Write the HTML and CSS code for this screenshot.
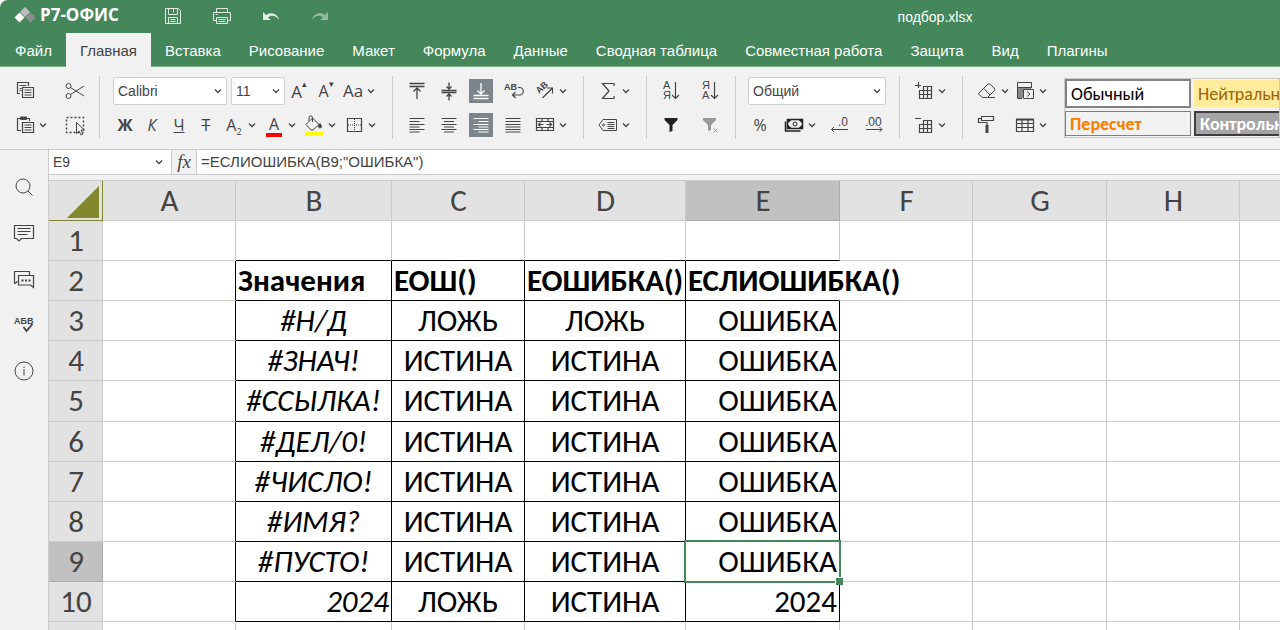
FILE: index.html
```html
<!DOCTYPE html>
<html lang="ru">
<head>
<meta charset="utf-8">
<title>подбор.xlsx</title>
<link rel="stylesheet" href="styles.css">
</head>
<body>
<svg class="defs" aria-hidden="true">
  <symbol id="caret" viewBox="0 0 12 24"><path d="M3 10.5l3 3 3-3" stroke-width="1.3"/></symbol>
  <symbol id="save" viewBox="0 0 24 24"><path d="M4.500 4.500h13l2 2v13h-15zM7.500 4.500v6h9v-6M12.500 5v3.500M7.500 19.500v-6h9v6M9.500 15.500h5M9.500 17.500h5"/></symbol>
  <symbol id="print" viewBox="0 0 24 24"><path d="M6.500 8.500v-4h11v4M6.500 16.500h-3v-8h17v8h-3M6.500 13.500h11v6h-11zM8.500 15.500h7M8.500 17.500h7M5.500 10.500h2"/></symbol>
  <symbol id="undo" viewBox="0 0 24 24"><path d="M4 8v8h8l-3-2.500c3-3 8-2 11 2.500-1-6-8-9-13-5z" fill="currentColor" stroke="none"/></symbol>
  <symbol id="redo" viewBox="0 0 24 24"><path d="M20 8v8h-8l3-2.500c-3-3-8-2-11 2.500 1-6 8-9 13-5z" fill="currentColor" stroke="none"/></symbol>
  <symbol id="copy" viewBox="0 0 24 24"><path d="M7 14.500H4.500v-11h11V7M6.500 6.500h7M6.500 9.500h2M6.500 11.500h2" stroke-width="1.200"/><path d="M9.500 8.500h11v10h-11zM11.500 11h7M11.500 13.500h7M11.500 16h7" stroke-width="1.200"/></symbol>
  <symbol id="cut" viewBox="0 0 24 24"><circle cx="5.500" cy="7" r="2.500"/><circle cx="5.500" cy="17" r="2.500"/><path d="M7.500 8.500L21 17M7.500 15.500L21 7"/></symbol>
  <symbol id="paste" viewBox="0 0 24 24"><path d="M8 17.500H4.500v-12h12V8" stroke-width="1.200"/><path d="M7.500 4h6v2.500h-6z" fill="currentColor"/><path d="M9.500 9.500h11v10h-11zM11.500 12h7M11.500 14.500h7M11.500 17h7" stroke-width="1.200"/></symbol>
  <symbol id="area" viewBox="0 0 24 24"><path d="M3.500 4.500h17v15h-17z" stroke-dasharray="2 2" stroke-width="1.400"/><path d="M13.500 9.500v11l2.500-2.500 2 4 2-1-2-4h3.500z" fill="#f1f1f1"/></symbol>
  <symbol id="alignTop" viewBox="0 0 24 24"><path d="M4.500 4.500h15M4.500 7.500h15" stroke-width="1.300"/><path d="M12 20V9M8.500 12.500L12 9l3.500 3.500" stroke-width="1.300"/></symbol>
  <symbol id="alignMid" viewBox="0 0 24 24"><path d="M4.500 11.500h15M4.500 13.500h15M12 3.500v7M9.500 7.500L12 10l2.500-2.500M12 21.500v-7M9.500 17.500L12 15l2.500 2.500" stroke-width="1.300"/></symbol>
  <symbol id="alignBot" viewBox="0 0 24 24"><path d="M4.500 16.500h15M4.500 19.500h15M12 4v11M8.500 11.500l3.500 3.500 3.500-3.500" stroke-width="1.300"/></symbol>
  <symbol id="left" viewBox="0 0 24 24"><path d="M4.500 5.500h15M4.500 8.500h10M4.500 11.500h15M4.500 14h10M4.500 16.500h15M4.500 19h10" stroke-width="1.200"/></symbol>
  <symbol id="center" viewBox="0 0 24 24"><path d="M4.500 5.500h15M7 8.500h10M4.500 11.500h15M7 14h10M4.500 16.500h15M7 19h10" stroke-width="1.200"/></symbol>
  <symbol id="right" viewBox="0 0 24 24"><path d="M4.500 5.500h15M9.500 8.500h10M4.500 11.500h15M9.500 14h10M4.500 16.500h15M9.500 19h10" stroke-width="1.200"/></symbol>
  <symbol id="justify" viewBox="0 0 24 24"><path d="M4.500 5.500h15M4.500 8.500h15M4.500 11.500h15M4.500 14h15M4.500 16.500h15M4.500 19h15" stroke-width="1.200"/></symbol>
  <symbol id="merge" viewBox="0 0 24 24"><path d="M3.500 5.500h17v12h-17zM3.500 8.500h17M3.500 14.500h17M9 5.500v3M15 5.500v3M9 14.500v3M15 14.500v3M5.500 11.500h5M13.500 11.500h5M7.500 9.500l-2 2 2 2M16.500 9.500l2 2-2 2" stroke-width="1.200"/></symbol>
  <symbol id="sum" viewBox="0 0 24 24"><path d="M18 7V4.500H6.500L13 12l-6.500 7.500H18V17" stroke-width="1.200"/></symbol>
  <symbol id="named" viewBox="0 0 24 24"><path d="M7 6.500h13.500v11H7l-4-5.500zM11.500 9.500h7M11.500 11.500h7M11.500 13.500h7M11.500 15.500h7"/><circle cx="7.500" cy="12" r="1"/></symbol>
  <symbol id="filter" viewBox="0 0 24 24"><path d="M5.500 5h13v2l-5 5V18l-3 1v-7l-5-5z" fill="currentColor" stroke="none"/></symbol>
  <symbol id="unfilter" viewBox="0 0 24 24"><path d="M5 5h13v2l-5 5V17l-3 1v-6L5 7z" fill="currentColor" stroke="none"/><path d="M15.500 15.500l4 4M19.500 15.500l-4 4"/></symbol>
  <symbol id="cash" viewBox="0 0 24 24"><path d="M5.500 6.500h15v9h-15zM3.500 8.500v9.500h15" stroke-width="1.500"/><circle cx="13" cy="11" r="2"/><path d="M6 7h3.500L6 10zM20 7h-3.500l3.500 3zM6 15h3.500L6 12zM20 15h-3.500l3.500-3z" fill="currentColor" stroke="none"/></symbol>
  <symbol id="insCell" viewBox="0 0 24 24"><path d="M3 6.500h6M6.500 3v6M11 7.500h8.500v12h-12V11M7.500 11.500h12M7.500 15.500h12M11.500 7.500v12M15.500 7.500v12" stroke-width="1.200"/></symbol>
  <symbol id="delCell" viewBox="0 0 24 24"><path d="M3 5.500h6M11 7.500h8.500v12h-12V11M7.500 11.500h12M7.500 15.500h12M11.500 7.500v12M15.500 7.500v12" stroke-width="1.200"/></symbol>
  <symbol id="eraser" viewBox="0 0 24 24"><path d="M4 14l8.500-8.500q1.500-1.500 3 0l3.500 3.500q1.500 1.500 0 3L12.500 18.500h-5L4 15.500q-1-.500 0-1.500zM9 9.500l6 6.500M12.500 18.500H20"/></symbol>
  <symbol id="cond" viewBox="0 0 24 24"><path d="M9 19.500H4.500v-16h14V9M4.500 8.500h14M4.500 12.500H10"/><path d="M5 9h13v3h-8v7H5z" fill="#888" stroke="none"/><path d="M10.500 10.500h10v9h-10z" fill="#f1f1f1"/><path d="M14 12.500l3 2.500-3 2.500"/></symbol>
  <symbol id="brush" viewBox="0 0 24 24"><path d="M6.500 3.500h12v4h-12zM6.500 5.500h-3v4h8.500v3" stroke-width="1.200"/><path d="M10.500 12h3v8h-3z" fill="currentColor" stroke="none"/></symbol>
  <symbol id="tbl" viewBox="0 0 24 24"><path d="M3.500 6.500h17v12h-17zM3.500 10.500h17M3.500 14.500h17M9 6.500v12M15 6.500v12" stroke-width="1.200"/><path d="M3 6.500h18" stroke-width="2"/></symbol>
  <symbol id="bucket" viewBox="0 0 24 24"><path d="M4 11.500L10.500 5l6.500 6.500-6 5.500H9zM10.500 9V4.500q0-2-2-1.500T7 5v3"/><path d="M18 10.500q3 4 0 4.500-3-.500 0-4.500z" fill="currentColor"/><path d="M3 18.500h18v4H3z" fill="#ff0" stroke="none"/></symbol>
  <symbol id="borders" viewBox="0 0 24 24"><path d="M5.500 5.500h14v13h-14z" stroke-width="1.200"/><path d="M12.500 6v12M6 12h13" stroke-dasharray="1 1"/></symbol>
  <symbol id="search" viewBox="0 0 24 24"><circle cx="11" cy="11" r="7"/><path d="M16 16l4.500 4.500"/></symbol>
  <symbol id="comment" viewBox="0 0 24 24"><path d="M2.500 4.500h19v13h-12L7 20l-2.500-2.500h-2zM5.500 7.500h13M5.500 10.500h13M5.500 13.500h10" stroke-width="1.200"/></symbol>
  <symbol id="chat" viewBox="0 0 24 24"><path d="M5.500 14.500L3 16.500h-.5v-12h15V8" stroke-width="1.200"/><path d="M6.500 8.500h15v12l-3-2.500h-12z" stroke-width="1.200"/><path d="M9.500 13.500h2M13 13.500h2M16.500 13.500h2" stroke-width="2"/></symbol>
  <symbol id="info" viewBox="0 0 24 24"><circle cx="12" cy="12" r="9"/><path d="M12 10v6.500M12 7.500v1.500"/></symbol>
</svg>
<div class="app">
  <header class="top">
    <div class="titlebar">
      <div class="logo">
        <svg viewBox="0 0 22 18" aria-hidden="true"><path d="M11 1l5 5-5 5-5-5z" fill="#bdbdbd"/><path d="M5.500 6.500l5 5-5 5-5-5z" fill="#fff"/><path d="M16.500 6.500l5 5-5 5-5-5z" fill="#8d8d8d"/></svg>
        <span>Р7-ОФИС</span>
      </div>
      <div class="quick">
        <button class="btn" aria-label="Сохранить"><svg><use href="#save"/></svg></button>
        <button class="btn" aria-label="Печать"><svg><use href="#print"/></svg></button>
        <button class="btn" aria-label="Отменить"><svg><use href="#undo"/></svg></button>
        <button class="btn dim" aria-label="Повторить"><svg><use href="#redo"/></svg></button>
      </div>
      <div class="doc">подбор.xlsx</div>
    </div>
    <nav class="tabs">
      <a href="#">Файл</a><a href="#" class="active">Главная</a><a href="#">Вставка</a><a href="#">Рисование</a><a href="#">Макет</a><a href="#">Формула</a><a href="#">Данные</a><a href="#">Сводная таблица</a><a href="#">Совместная работа</a><a href="#">Защита</a><a href="#">Вид</a><a href="#">Плагины</a>
    </nav>
  </header>

  <div class="toolbar">
    <div class="group clip">
      <div class="row"><button class="btn" aria-label="Копировать"><svg><use href="#copy"/></svg></button><button class="btn" aria-label="Вырезать"><svg><use href="#cut"/></svg></button></div>
      <div class="row"><button class="btn drop" aria-label="Вставить"><svg><use href="#paste"/></svg><svg class="c"><use href="#caret"/></svg></button><button class="btn" aria-label="Выделить"><svg><use href="#area"/></svg></button></div>
    </div>
    <div class="group font">
      <div class="row">
        <span class="combo family"><select aria-label="Шрифт"><option>Calibri</option></select><svg class="c"><use href="#caret"/></svg></span>
        <span class="combo size"><select aria-label="Размер"><option>11</option></select><svg class="c"><use href="#caret"/></svg></span>
        <span class="row tight"><button class="btn glyph big">A<sup>▴</sup></button><button class="btn glyph">A<sup>▾</sup></button><button class="btn drop glyph big"><span>Aa</span><svg class="c"><use href="#caret"/></svg></button></span>
      </div>
      <div class="row">
        <span class="row tight"><button class="btn glyph"><b>Ж</b></button><button class="btn glyph"><i>К</i></button><button class="btn glyph"><u>Ч</u></button><button class="btn glyph"><s>Т</s></button></span>
        <button class="btn drop glyph"><span>A<sub>2</sub></span><svg class="c"><use href="#caret"/></svg></button>
        <button class="btn drop glyph"><span class="color">A</span><svg class="c"><use href="#caret"/></svg></button>
        <button class="btn drop" aria-label="Заливка"><svg><use href="#bucket"/></svg><svg class="c"><use href="#caret"/></svg></button>
        <button class="btn drop" aria-label="Границы"><svg><use href="#borders"/></svg><svg class="c"><use href="#caret"/></svg></button>
      </div>
    </div>
    <div class="group align">
      <div class="row"><button class="btn" aria-label="По верхнему краю"><svg><use href="#alignTop"/></svg></button><button class="btn" aria-label="Посередине"><svg><use href="#alignMid"/></svg></button><button class="btn on" aria-label="По нижнему краю"><svg><use href="#alignBot"/></svg></button><button class="btn" aria-label="Перенос текста"><svg viewBox="0 0 24 24"><text x="3" y="11" class="ab">AB</text><path d="M17 8.500h1.500a3 3 0 010 7.500H12M14.500 13l-3 3 3 3" stroke-width="1.200"/></svg></button><button class="btn drop" aria-label="Ориентация"><svg viewBox="0 0 24 24"><text x="6" y="15" class="ab" transform="rotate(-42 6 15)">AB</text><path d="M9.500 19L19 9.500M14 9h5.500v5.500" stroke-width="1.200"/></svg><svg class="c"><use href="#caret"/></svg></button></div>
      <div class="row"><button class="btn" aria-label="По левому краю"><svg><use href="#left"/></svg></button><button class="btn" aria-label="По центру"><svg><use href="#center"/></svg></button><button class="btn on" aria-label="По правому краю"><svg><use href="#right"/></svg></button><button class="btn" aria-label="По ширине"><svg><use href="#justify"/></svg></button><button class="btn drop" aria-label="Объединить"><svg><use href="#merge"/></svg><svg class="c"><use href="#caret"/></svg></button></div>
    </div>
    <div class="group">
      <div class="row"><button class="btn drop" aria-label="Сумма"><svg><use href="#sum"/></svg><svg class="c"><use href="#caret"/></svg></button></div>
      <div class="row"><button class="btn drop" aria-label="Имена"><svg><use href="#named"/></svg><svg class="c"><use href="#caret"/></svg></button></div>
    </div>
    <div class="group sort">
      <div class="row"><button class="btn" aria-label="По возрастанию"><svg viewBox="0 0 24 24"><text x="4" y="10" class="ay">А</text><text x="4" y="20" class="ay">Я</text><path d="M16.500 3v16M13 16l3.500 3.500L20 16" stroke-width="1.200"/></svg></button><button class="btn" aria-label="По убыванию"><svg viewBox="0 0 24 24"><text x="4" y="10" class="ay">Я</text><text x="4" y="20" class="ay">А</text><path d="M16.500 3v16M13 16l3.500 3.500L20 16" stroke-width="1.200"/></svg></button></div>
      <div class="row"><button class="btn dark" aria-label="Фильтр"><svg><use href="#filter"/></svg></button><button class="btn dim" aria-label="Очистить фильтр"><svg><use href="#unfilter"/></svg></button></div>
    </div>
    <div class="group format-group">
      <div class="row"><span class="combo format"><select aria-label="Формат"><option>Общий</option></select><svg class="c"><use href="#caret"/></svg></span></div>
      <div class="row numbers"><button class="btn glyph">%</button><button class="btn drop dark" aria-label="Денежный"><svg><use href="#cash"/></svg><svg class="c"><use href="#caret"/></svg></button><button class="btn" aria-label="Уменьшить разрядность"><svg viewBox="0 0 24 24"><text x="10" y="13" class="num">.0</text><path d="M20 16.500H3.500M6 14l-2.500 2.500L6 19"/></svg></button><button class="btn" aria-label="Увеличить разрядность"><svg viewBox="0 0 24 24"><text x="3" y="13" class="num">.00</text><path d="M4 16.500h16M17.500 14l2.500 2.500-2.500 2.500"/></svg></button></div>
    </div>
    <div class="group">
      <div class="row"><button class="btn drop" aria-label="Вставить ячейки"><svg><use href="#insCell"/></svg><svg class="c"><use href="#caret"/></svg></button></div>
      <div class="row"><button class="btn drop" aria-label="Удалить ячейки"><svg><use href="#delCell"/></svg><svg class="c"><use href="#caret"/></svg></button></div>
    </div>
    <div class="group last">
      <div class="row"><button class="btn drop" aria-label="Очистить"><svg><use href="#eraser"/></svg><svg class="c"><use href="#caret"/></svg></button><button class="btn drop" aria-label="Условное форматирование"><svg><use href="#cond"/></svg><svg class="c"><use href="#caret"/></svg></button></div>
      <div class="row"><button class="btn drop" aria-label="Копировать стиль"><svg><use href="#brush"/></svg></button><button class="btn drop" aria-label="Таблица"><svg><use href="#tbl"/></svg><svg class="c"><use href="#caret"/></svg></button></div>
    </div>
    <div class="gallery">
      <button class="style normal">Обычный</button><button class="style neutral">Нейтральный</button>
      <button class="style calc">Пересчет</button><button class="style check">Контрольная</button>
    </div>
  </div>

  <div class="main">
    <aside class="side">
      <button class="btn" aria-label="Поиск"><svg><use href="#search"/></svg></button>
      <button class="btn" aria-label="Комментарии"><svg><use href="#comment"/></svg></button>
      <button class="btn" aria-label="Чат"><svg><use href="#chat"/></svg></button>
      <button class="btn" aria-label="Орфография"><svg viewBox="0 0 24 24"><text x="2" y="11" class="spell">АБВ</text><path d="M11.500 14l3 4 6-7" stroke-width="1.800"/></svg></button>
      <button class="btn" aria-label="О программе"><svg><use href="#info"/></svg></button>
    </aside>
    <div class="work">
      <div class="formula">
        <span class="combo name"><input aria-label="Имя ячейки" value="E9"><svg class="c"><use href="#caret"/></svg></span>
        <button class="fx">fx</button>
        <input class="expr" aria-label="Формула" value='=ЕСЛИОШИБКА(B9;"ОШИБКА")'>
      </div>
      <div class="sheet">
        <table>
          <colgroup><col class="w-head"><col class="w-a"><col class="w-b"><col class="w-a"><col class="w-d"><col class="w-e"><col class="w-a"><col class="w-g"><col class="w-a"><col class="w-a"></colgroup>
          <thead><tr><th class="corner"><svg viewBox="0 0 32 32" aria-hidden="true"><path d="M32 0v32H0z"/></svg></th><th>A</th><th>B</th><th>C</th><th>D</th><th class="sel">E</th><th>F</th><th>G</th><th>H</th><th></th></tr></thead>
          <tbody>
            <tr class="first"><th>1</th><td></td><td class="ub"></td><td class="ub"></td><td class="ub"></td><td class="ub"></td><td></td><td></td><td></td><td></td></tr>
            <tr class="data heads"><th>2</th><td></td><td>Значения</td><td>ЕОШ()</td><td>ЕОШИБКА()</td><td class="spill"><span>ЕСЛИОШИБКА()</span></td><td></td><td></td><td></td><td></td></tr>
            <tr class="data"><th>3</th><td></td><td>#Н/Д</td><td>ЛОЖЬ</td><td>ЛОЖЬ</td><td>ОШИБКА</td><td></td><td></td><td></td><td></td></tr>
            <tr class="data"><th>4</th><td></td><td>#ЗНАЧ!</td><td>ИСТИНА</td><td>ИСТИНА</td><td>ОШИБКА</td><td></td><td></td><td></td><td></td></tr>
            <tr class="data tall"><th>5</th><td></td><td>#ССЫЛКА!</td><td>ИСТИНА</td><td>ИСТИНА</td><td>ОШИБКА</td><td></td><td></td><td></td><td></td></tr>
            <tr class="data"><th>6</th><td></td><td>#ДЕЛ/0!</td><td>ИСТИНА</td><td>ИСТИНА</td><td>ОШИБКА</td><td></td><td></td><td></td><td></td></tr>
            <tr class="data"><th>7</th><td></td><td>#ЧИСЛО!</td><td>ИСТИНА</td><td>ИСТИНА</td><td>ОШИБКА</td><td></td><td></td><td></td><td></td></tr>
            <tr class="data"><th>8</th><td></td><td>#ИМЯ?</td><td>ИСТИНА</td><td>ИСТИНА</td><td>ОШИБКА</td><td></td><td></td><td></td><td></td></tr>
            <tr class="data"><th class="sel">9</th><td></td><td>#ПУСТО!</td><td>ИСТИНА</td><td>ИСТИНА</td><td class="cursor">ОШИБКА</td><td></td><td></td><td></td><td></td></tr>
            <tr class="data"><th>10</th><td></td><td class="r">2024</td><td>ЛОЖЬ</td><td>ИСТИНА</td><td>2024</td><td></td><td></td><td></td><td></td></tr>
            <tr><th></th><td></td><td></td><td></td><td></td><td></td><td></td><td></td><td></td><td></td></tr>
          </tbody>
        </table>
      </div>
    </div>
  </div>
</div>
</body>
</html>
```

FILE: styles.css
```css
* { box-sizing: border-box; }
body {
  margin: 0;
  background: #fff;
  color: #444;
  font-family: "Liberation Sans", Arial, sans-serif;
  overflow: hidden;
}
button, select, input { font: inherit; color: inherit; }
button { background: none; border: 0; padding: 0; }
svg { fill: none; stroke: currentColor; }
.defs { position: absolute; width: 0; height: 0; }
.app {
  display: flex;
  flex-direction: column;
  height: 100vh;
  border-top-left-radius: 8px;
  overflow: hidden;
}

/* Header */
.top { background: #43875b; color: #fff; }
.titlebar { display: flex; align-items: center; height: 33px; padding-left: 14px; }
.logo { display: flex; align-items: center; gap: 4px; width: 147px; font: bold 17px/28px "Open Sans", "Noto Sans", sans-serif; padding-bottom: 4px; }
.logo svg { width: 22px; height: 18px; stroke: none; }
.quick { display: flex; gap: 25px; padding-bottom: 2px; opacity: .85; }
.quick .dim { opacity: .5; }
.doc { flex: 1; padding-left: 318px; padding-right: 60px; text-align: center; font-size: 14px; }
.tabs { display: flex; height: 34px; padding-left: 1px; border-bottom: 1px solid #7fb092; }
.tabs a {
  padding: 0 14px;
  line-height: 35px;
  color: #fff;
  font-size: 15px;
  text-decoration: none;
  white-space: nowrap;
}
.tabs .active { height: 34px; background: #f1f1f1; color: #444; }

/* Toolbar */
.toolbar {
  display: flex;
  height: 83px;
  padding: 9px 0 10px;
  background: #f1f1f1;
  border-bottom: 1px solid #cbcbcb;
  flex: none;
}
.group {
  display: flex;
  flex: none;
  flex-direction: column;
  gap: 10px;
  padding: 3px 14px 3px 12px;
  border-right: 1px solid #cbcbcb;
}
.group.clip { padding-left: 13px; padding-right: 12px; }
.group.font { padding-left: 13px; padding-right: 14px; }
.group.align { padding-right: 2px; }
.group.sort { padding-right: 13px; }
.group.format-group { padding-right: 13px; }
.group.last { padding-right: 15px; border: 0; }
.row { display: flex; gap: 4px; height: 24px; align-items: center; }
.row.tight { gap: 3px; }
.clip .row { justify-content: space-between; width: 74px; }
.align .row { gap: 8px; width: 176px; }
.sort .row { gap: 15px; }
.last .row { gap: 2px; }
.numbers { justify-content: space-between; }
.btn { display: flex; flex: none; width: 24px; height: 24px; color: #444; align-items: center; }
.btn svg { width: 24px; height: 24px; flex: none; }
.btn.drop { width: 36px; }
.btn .c, .combo .c { width: 12px; height: 24px; flex: none; color: #444; }
.btn.on { background: #7d858c; color: #fff; }
.btn.dim { color: #999; }
.btn.dark { color: #222; }
.quick .btn, .quick .dim { color: #fff; }
.glyph { justify-content: center; font: 16px "Open Sans", "Noto Sans", sans-serif; }
.glyph span { width: 24px; text-align: center; line-height: 22px; white-space: nowrap; }
.glyph sup, .glyph sub { font-size: 9px; line-height: 9px; }
.glyph sup { align-self: flex-start; }
.glyph.big { font-size: 17px; }
.glyph .color { height: 22px; line-height: 18px; border-bottom: 4px solid #f00; width: 16px; margin: 2px 4px 0; }
.combo { display: flex; align-items: center; position: relative; height: 28px; background: #fff; border: 1px solid #cfcfcf; border-radius: 2px; }
.combo select, .combo input {
  flex: 1;
  min-width: 0;
  width: 100%;
  height: 100%;
  padding: 0 4px;
  border: 0;
  background: none;
  appearance: none;
  font-size: 14px;
}
.combo .c { position: absolute; right: 2px; pointer-events: none; }
.family { width: 114px; }
.size { width: 54px; margin-right: -2px; }
.format { width: 138px; }
.ab, .ay, .num, .spell { fill: currentColor; stroke: none; font-family: "Liberation Sans", sans-serif; }
.ab { font-size: 9px; font-weight: bold; }
.ay { font-size: 11px; }
.num { font-size: 12px; }
.spell { font-size: 9px; font-weight: bold; }

.gallery {
  display: grid;
  flex: 1;
  align-self: flex-start;
  grid-template-columns: 126px 126px;
  grid-template-rows: 29px 25px;
  gap: 3px;
  height: 60px;
  margin-top: 2px;
  padding: 0 0 1px;
  border: 1px solid #cbcbcb;
  overflow: hidden;
}
.style { padding-left: 4px; text-align: left; font: 18px/20px Carlito, "Open Sans", sans-serif; white-space: nowrap; overflow: hidden; }
.normal { background: #fff; border: 2px solid #848484; color: #000; }
.neutral { background: #ffeb9c; color: #9c6500; margin: 1px 0; }
.calc { background: #f2f2f2; border: 1px solid #7f7f7f; color: #fa7d00; font-weight: bold; }
.check { background: #a5a5a5; border: 2px solid #3f3f3f; color: #fff; font-weight: bold; }

/* Work area */
.main { display: flex; flex: 1; min-height: 0; }
.side {
  display: flex;
  flex: none;
  flex-direction: column;
  align-items: center;
  gap: 22px;
  width: 49px;
  padding-top: 25px;
  background: #f1f1f1;
  border-right: 1px solid #cbcbcb;
}
.work { display: flex; flex: 1; min-width: 0; flex-direction: column; background: #f1f1f1; }
.formula { display: flex; height: 25px; background: #fff; border-bottom: 1px solid #cbcbcb; flex: none; }
.name { width: 122px; height: 24px; border: 0; border-radius: 0; }
.name .c { right: 6px; }
.fx { width: 26px; background: #f1f1f1; border: solid #cbcbcb; border-width: 0 1px; font: italic 19px/22px "Liberation Serif", serif; }
.expr { flex: 1; border: 0; padding: 0 4px 2px; font-size: 15px; background: none; }
.sheet { flex: 1; margin-top: 5px; overflow: hidden; background: #fff; border-top: 1px solid #cbcbcb; }

table { width: 0; min-width: 100%; table-layout: fixed; border-collapse: separate; border-spacing: 0; font: 31px/32px Carlito, Lato, sans-serif; }
.w-head { width: 54px; }
.w-a { width: 133px; }
.w-b { width: 156px; }
.w-d { width: 161px; }
.w-e { width: 154px; }
.w-g { width: 134px; }
th, td { height: 40px; padding: 0 2px 2px; border: solid #cbcbcb; border-width: 0 1px 1px 0; white-space: nowrap; }
th { padding-left: 3px; }
.tall th, .tall td { height: 41px; }
th { background: #e2e2e2; color: #444; font-weight: normal; text-align: center; }
th.sel { background: #c1c1c1; border-color: #aaa; }
td { color: #000; text-align: center; }
.corner { padding: 3px 3px 0 0; border-color: #7c8430; }
.corner svg { display: block; width: 32px; height: 32px; margin-left: auto; fill: #83882d; stroke: none; }
.ub { border-bottom-color: #000; }
.data td:nth-child(2) { border-right-color: #000; }
.data td:nth-child(n+3):nth-child(-n+6) { border-color: #000; }
.data td:nth-child(3) { font-style: italic; }
.data td:nth-child(6), .data .r { text-align: right; }
.heads td:nth-child(n) { text-align: left; font-style: normal; font-weight: bold; }
.data.heads td.spill:nth-child(6) { border-right-color: #fff; }
.spill span { position: relative; }
.cursor { position: relative; }
.cursor::before {
  content: "";
  position: absolute;
  inset: -2px;
  border: 2px solid #43875b;
}
.cursor::after {
  content: "";
  position: absolute;
  right: -4px;
  bottom: -4px;
  width: 7px;
  height: 7px;
  background: #43875b;
  border: solid #fff;
  border-width: 1px 0 0 1px;
}
```
